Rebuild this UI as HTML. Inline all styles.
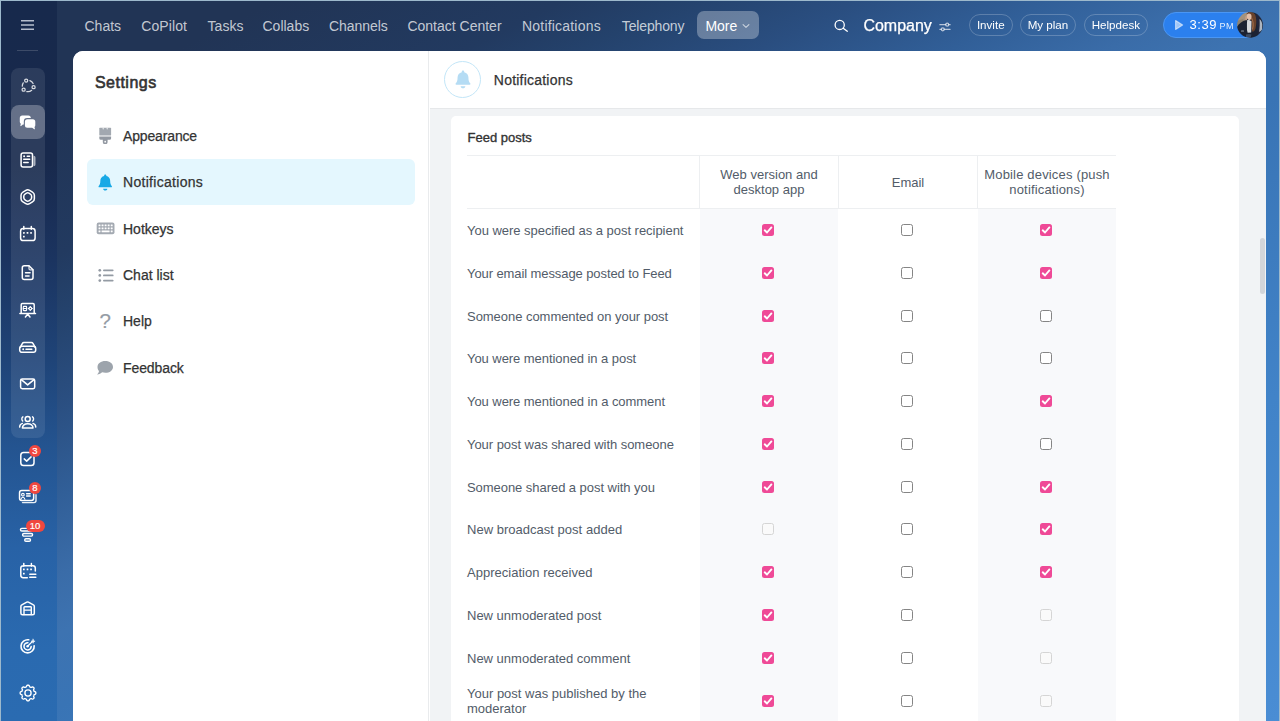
<!DOCTYPE html>
<html lang="en">
<head>
<meta charset="utf-8">
<title>Settings - Notifications</title>
<style>
*{box-sizing:border-box;margin:0;padding:0}
html,body{width:1280px;height:721px;overflow:hidden}
body{opacity:.999;font-family:"Liberation Sans",Arial,sans-serif;position:relative;background:#9db9cc;color:#333}
.abs{position:absolute}
#bg{position:absolute;left:1px;top:1px;width:1278px;height:720px;
 background:linear-gradient(153.4deg,#213455 0%,#213455 10%,#223a60 20.7%,#24426c 25%,#2a4e80 31.5%,#315f98 38.5%,#3a6ca8 44.3%,#3d73b1 48.6%,#3974b5 54%,#4183c8 76%,#4a8dd4 100%)}
#side{position:absolute;left:1px;top:1px;width:56px;height:720px;
 background:linear-gradient(to bottom,#17294c 0%,#18294c 22%,#1b3460 36%,#1f4478 50%,#245490 62%,#2862a6 76%,#2a6ab0 90%,#2a6bb1 100%)}
#side .sep{position:absolute;left:16px;top:49px;width:21px;height:1px;background:rgba(255,255,255,.16)}
#side .grp{position:absolute;left:10px;top:67px;width:34px;height:370px;border-radius:8px;background:rgba(255,255,255,.09)}
#side .act{position:absolute;left:10px;top:104px;width:34px;height:34px;border-radius:8px;background:rgba(255,255,255,.27)}
#side svg{position:absolute;left:17px;width:20px;height:20px;fill:none;stroke:#fff;stroke-width:1.5;stroke-linecap:round;stroke-linejoin:round}
.badge{position:absolute;height:12.200px;border-radius:6.100px;background:#f0473f;color:#fff;font-size:9.500px;line-height:12.200px;text-align:center;-webkit-text-stroke:.2px #fff}
/* top nav */
.nav{position:absolute;top:1px;height:51px;line-height:51px;font-size:14px;color:rgba(255,255,255,.74);white-space:nowrap}
#more{position:absolute;left:697px;top:11px;width:61.5px;height:28px;border-radius:7px;background:rgba(255,255,255,.3)}
.pill{position:absolute;top:14px;height:22px;border:1px solid rgba(255,255,255,.22);border-radius:11px;color:#fff;font-size:11.6px;line-height:20px;text-align:center;white-space:nowrap}
/* panel */
#panel{position:absolute;left:73px;top:51px;width:1193px;height:670px;background:#fff;border-radius:10px 10px 0 0;overflow:hidden}
#left{position:absolute;left:0;top:0;width:356px;height:670px;background:#fff;border-right:1px solid #e9ebed}
.mi{position:absolute;left:14px;width:328px;height:46px;border-radius:6px}
.mi span{position:absolute;left:36px;top:0;line-height:46px;font-size:14px;color:#333;white-space:nowrap;-webkit-text-stroke:.25px #333}
.mi svg{position:absolute}
#right{position:absolute;left:357px;top:0;width:836px;height:670px;background:#f1f3f5}
#hdr{position:absolute;left:0;top:0;width:836px;height:58px;background:#fff;border-bottom:1px solid #e6e8ea}
#card{position:absolute;left:21px;top:65px;width:787.5px;height:620px;background:#fff;border-radius:5px}
#cin{position:absolute;left:1px;top:-1px;width:0;height:0}
.lbl{position:absolute;left:15px;font-size:13px;color:#525c69;white-space:nowrap;line-height:15px}
.col{position:absolute;top:94px;width:138px;height:560px;background:#f8f9fb}
.hl{position:absolute;background:#edeff1}
.th{position:absolute;top:41px;width:139px;height:53px;padding-bottom:2px;display:flex;align-items:center;justify-content:center;text-align:center;font-size:13px;line-height:15px;color:#525c69}
.cb{position:absolute;width:12px;height:12px;border-radius:2.5px}
.cb.on{background:#ef4a97}
.cb.off{background:#fff;border:1px solid #858585}
.cb.dis{background:#fafafa;border:1px solid #d5d5d5}
.cb.on svg{position:absolute;left:0;top:0;width:12px;height:12px}
</style>
</head>
<body>
<div id="bg"></div>
<div id="side">
 <div class="sep"></div>
 <div class="grp"></div>
 <div class="act"></div>
<!--ICONS-->
<svg style="top:73.5px" viewBox="0 0 20 20"><g stroke="rgba(255,255,255,.82)" stroke-width="1.25"><path d="M13.68 15.35A5.70 5.70 0 0 1 8.80 16.57M4.30 11.18A5.70 5.70 0 0 1 5.24 7.86M11.89 5.62A5.70 5.70 0 0 1 15.11 8.48"/><circle cx="15.58" cy="12.16" r="1.55"/><circle cx="5.62" cy="14.65" r="1.55"/><circle cx="8.18" cy="5.60" r="1.55"/></g></svg>
<svg style="top:111.0px" viewBox="0 0 20 20"><g stroke="none" fill="#fff"><path d="M4.3 3.400h6a2.500 2.500 0 0 1 2.500 2.500v.2H9.200a3.400 3.400 0 0 0-3.400 3.400v3H4.900l-1.800 1.500c-.4.300-.8.100-.7-.4l.4-1.900A2.500 2.500 0 0 1 1.800 10V5.900a2.500 2.500 0 0 1 2.500-2.500z"/><path d="M9.400 7.200h5.400a2.500 2.500 0 0 1 2.500 2.500v3.500a2.500 2.500 0 0 1-.8 1.800l.4 1.800c.1.500-.3.700-.7.400l-2-1.500H9.400a2.500 2.500 0 0 1-2.500-2.500V9.700a2.500 2.500 0 0 1 2.500-2.500z"/></g></svg>
<svg style="top:148.5px" viewBox="0 0 20 20"><rect x="3.100" y="3" width="11.400" height="14" rx="2"/><path d="M15.500 5.700h.3a1.700 1.700 0 0 1 1.700 1.700v7.200a1.700 1.700 0 0 1-1.700 1.700h-.3z" fill="rgba(255,255,255,.6)" stroke="none"/><circle cx="6.100" cy="6.300" r="1" fill="#fff" stroke="none"/><path d="M9.200 6.300h2.400M5.700 9.300h6M5.700 12.500h4.500" stroke-width="1.400"/></svg>
<svg style="top:186.0px" viewBox="0 0 20 20"><path d="M7.79 3.40Q9.70 2.30 11.61 3.40L14.46 5.05Q16.37 6.15 16.37 8.35L16.37 11.65Q16.37 13.85 14.46 14.95L11.61 16.60Q9.70 17.70 7.79 16.60L4.94 14.95Q3.03 13.85 3.03 11.65L3.03 8.35Q3.03 6.15 4.94 5.05Z"/><path d="M8.49 6.20Q9.70 5.50 10.91 6.20L12.38 7.05Q13.60 7.75 13.60 9.15L13.60 10.85Q13.60 12.25 12.38 12.95L10.91 13.80Q9.70 14.50 8.49 13.80L7.02 12.95Q5.80 12.25 5.80 10.85L5.80 9.15Q5.80 7.75 7.02 7.05Z" stroke-width="1.5"/></svg>
<svg style="top:223.0px" viewBox="0 0 20 20"><rect x="2.600" y="4.600" width="14.500" height="12" rx="2.600"/><path d="M5.800 2.400v2.800M13.300 2.400v2.800"/><g fill="#fff" stroke="none"><rect x="5" y="8.100" width="1.700" height="1.700" rx=".3"/><rect x="8.650" y="8.100" width="1.700" height="1.700" rx=".3"/><rect x="12.200" y="8.100" width="1.700" height="1.700" rx=".3"/><rect x="5" y="11.700" width="1.700" height="1.700" rx=".3"/></g></svg>
<svg style="top:260.5px" viewBox="0 0 20 20"><path d="M6.300 3.800h4.700l4 4v7.600a2 2 0 0 1-2 2H6.300a2 2 0 0 1-2-2V5.800a2 2 0 0 1 2-2z"/><path d="M11 3.800v2.800a1.200 1.200 0 0 0 1.200 1.200H15" stroke-width="1.300" stroke="rgba(255,255,255,.8)"/><path d="M7.500 10.800h4.600M7.500 14h3.600" stroke-width="1.400"/></svg>
<svg style="top:298.0px" viewBox="0 0 20 20"><path d="M3.200 14.500V5.800a1.200 1.200 0 0 1 1.200-1.200h10.600a1.200 1.200 0 0 1 1.200 1.200v8.700M1.900 14.600h15.600M9.700 15.300l-2.300 2.700M9.700 15.300l2.300 2.700" stroke-width="1.500"/><rect x="5.300" y="7.400" width="3.300" height="4.200" rx=".5" stroke-width="1.100"/><path d="M5.300 9.500h3.300" stroke-width="1.100"/><circle cx="12.300" cy="9.500" r="1.400" stroke-width="1.100"/><path d="M12.300 7.400v.8M12.300 10.800v.8M10.200 9.500h.8M13.600 9.500h.8" stroke-width="1"/></svg>
<svg style="top:335.5px" viewBox="0 0 20 20"><rect x="1.700" y="9.300" width="16" height="6" rx="2.300"/><path d="M2.300 10.200l2-3.600a2 2 0 0 1 1.700-1h7.400a2 2 0 0 1 1.700 1l2 3.600"/><circle cx="5.200" cy="12.300" r=".95" fill="#fff" stroke="none"/><path d="M8 12.300h5.800" stroke-width="1.500"/></svg>
<svg style="top:373.0px" viewBox="0 0 20 20"><rect x="2.600" y="4.900" width="14.100" height="9.800" rx="1.600"/><path d="M3.300 5.700l6.350 5.200l6.350-5.200"/></svg>
<svg style="top:410.5px" viewBox="0 0 20 20"><circle cx="9.700" cy="6.900" r="2.500"/><path d="M4.400 16.100c0-2.800 2.300-4.400 5.300-4.400s5.300 1.600 5.300 4.400z"/><g stroke-width="1.400"><path d="M4.900 4.800c-1.300.9-1.500 3-.2 4.200M14.500 4.800c1.300.9 1.500 3 .2 4.200M1.600 15.100c.1-2 1.200-3.200 2.800-3.700M17.800 15.100c-.1-2-1.200-3.200-2.800-3.700"/></g></svg>
<svg style="top:448.0px" viewBox="0 0 20 20"><rect x="2.800" y="3.500" width="13.200" height="13" rx="2.800"/><path d="M6.200 9.900l2.500 2.200l4.400-4.200" stroke-width="1.500"/></svg>
<svg style="top:485.0px" viewBox="0 0 20 20"><path d="M4.500 16.600h11.500a2 2 0 0 0 2-2V8.800" stroke="rgba(255,255,255,.9)" stroke-width="1.400"/><rect x="1.550" y="4.550" width="14.100" height="9.900" rx="2.200"/><circle cx="4.900" cy="8.700" r="1.350" stroke-width="1.100"/><path d="M2.900 13.300c.3-1.500 1.100-2.100 2-2.100s1.700.6 2 2.100" stroke-width="1.100"/><path d="M8.600 7.700h3.600M8.600 10h3.600" stroke-width="1.400"/></svg>
<svg style="top:522.5px" viewBox="0 0 20 20"><g stroke-width="1.400"><rect x="2.500" y="4.400" width="14" height="2.600" rx="1.300"/><rect x="4.600" y="9.500" width="10" height="2.600" rx="1.300"/><rect x="6.700" y="14.700" width="5.800" height="2.500" rx="1.250"/></g></svg>
<svg style="top:560.0px" viewBox="0 0 20 20"><path d="M9.300 16.700H5.200a2.400 2.400 0 0 1-2.400-2.400V7.100a2.400 2.400 0 0 1 2.400-2.400h9.700a2.400 2.400 0 0 1 2.400 2.400v2.900M5.800 2.600v2.700M13.400 2.600v2.700"/><g fill="#fff" stroke="none"><rect x="5" y="7.500" width="1.700" height="1.700" rx=".3"/><rect x="8.650" y="7.500" width="1.700" height="1.700" rx=".3"/><rect x="12.200" y="7.500" width="1.700" height="1.700" rx=".3"/><rect x="5" y="11.700" width="1.700" height="1.700" rx=".3"/></g><path d="M11.800 13.300h6M11.800 16.300h6" stroke-width="1.500"/></svg>
<svg style="top:597.5px" viewBox="0 0 20 20"><path d="M2.900 14.200V7.300a1.600 1.600 0 0 1 .9-1.400l5-2.700a1.700 1.700 0 0 1 1.600 0l5 2.700a1.600 1.600 0 0 1 .9 1.400v6.900a1.500 1.500 0 0 1-1.500 1.500H4.400a1.500 1.500 0 0 1-1.500-1.500z"/><path d="M6 15.600V8.400a.7.700 0 0 1 .7-.7h5.900a.7.700 0 0 1 .7.700v7.200M6 11.100h7.300" stroke-width="1.400"/></svg>
<svg style="top:635.0px" viewBox="0 0 20 20"><path d="M16.17 9.72A6.60 6.60 0 1 1 10.75 3.80" stroke-width="1.600"/><path d="M13.19 10.61A3.60 3.60 0 1 1 9.91 6.71" stroke-width="1.500"/><circle cx="9.6" cy="10.3" r="1.200" fill="#fff" stroke="none"/><path d="M9.6 10.3L14 5.900" stroke-width="1.300"/><path d="M15.100 3.200l.5 1.500l1.500.5l-1.500.6l-.5 1.500l-.6-1.500l-1.500-.6l1.500-.5z" fill="#fff" stroke="#fff" stroke-width=".5"/></svg>
<svg style="top:682.0px" viewBox="0 0 20 20"><path d="M10.00 2.20L10.38 2.21L10.76 2.24L11.11 2.54L11.38 3.09L11.59 3.63L11.83 3.97L12.12 4.07L12.41 4.18L12.69 4.30L12.97 4.44L13.37 4.37L13.92 4.14L14.49 3.95L14.95 3.97L15.24 4.22L15.52 4.48L15.78 4.76L16.03 5.05L16.05 5.51L15.86 6.08L15.63 6.63L15.56 7.03L15.70 7.31L15.82 7.59L15.93 7.88L16.03 8.17L16.37 8.41L16.91 8.62L17.46 8.89L17.76 9.24L17.79 9.62L17.80 10.00L17.79 10.38L17.76 10.76L17.46 11.11L16.91 11.38L16.37 11.59L16.03 11.83L15.93 12.12L15.82 12.41L15.70 12.69L15.56 12.97L15.63 13.37L15.86 13.92L16.05 14.49L16.03 14.95L15.78 15.24L15.52 15.52L15.24 15.78L14.95 16.03L14.49 16.05L13.92 15.86L13.37 15.63L12.97 15.56L12.69 15.70L12.41 15.82L12.12 15.93L11.83 16.03L11.59 16.37L11.38 16.91L11.11 17.46L10.76 17.76L10.38 17.79L10.00 17.80L9.62 17.79L9.24 17.76L8.89 17.46L8.62 16.91L8.41 16.37L8.17 16.03L7.88 15.93L7.59 15.82L7.31 15.70L7.03 15.56L6.63 15.63L6.08 15.86L5.51 16.05L5.05 16.03L4.76 15.78L4.48 15.52L4.22 15.24L3.97 14.95L3.95 14.49L4.14 13.92L4.37 13.37L4.44 12.97L4.30 12.69L4.18 12.41L4.07 12.12L3.97 11.83L3.63 11.59L3.09 11.38L2.54 11.11L2.24 10.76L2.21 10.38L2.20 10.00L2.21 9.62L2.24 9.24L2.54 8.89L3.09 8.62L3.63 8.41L3.97 8.17L4.07 7.88L4.18 7.59L4.30 7.31L4.44 7.03L4.37 6.63L4.14 6.08L3.95 5.51L3.97 5.05L4.22 4.76L4.48 4.48L4.76 4.22L5.05 3.97L5.51 3.95L6.08 4.14L6.63 4.37L7.03 4.44L7.31 4.30L7.59 4.18L7.88 4.07L8.17 3.97L8.41 3.63L8.62 3.09L8.89 2.54L9.24 2.24L9.62 2.21L10.00 2.20Z" stroke-width="1.350"/><circle cx="10" cy="10" r="3.100" stroke-width="1.350"/></svg>
<div class="badge" style="left:27.900px;top:443.900px;width:12.200px">3</div>
<div class="badge" style="left:27.900px;top:481.100px;width:12.200px">8</div>
<div class="badge" style="left:24.500px;top:519px;width:19px">10</div>
<!--/ICONS-->
</div>
<div id="top">
 <svg class="abs" style="left:20px;top:18px;width:15px;height:14px" viewBox="0 0 15 14"><path d="M1 2.7h13M1 7h13M1 11.3h13" stroke="#b6becd" stroke-width="1.5" fill="none"/></svg>
 <span class="nav" id="n1" style="left:84.5px">Chats</span>
 <span class="nav" id="n2" style="left:141.2px;letter-spacing:.1px">CoPilot</span>
 <span class="nav" id="n3" style="left:207.6px">Tasks</span>
 <span class="nav" id="n4" style="left:262.5px">Collabs</span>
 <span class="nav" id="n5" style="left:329px;letter-spacing:-.05px">Channels</span>
 <span class="nav" id="n6" style="left:407.4px">Contact Center</span>
 <span class="nav" id="n7" style="left:522px;letter-spacing:.2px">Notifications</span>
 <span class="nav" id="n8" style="left:621.8px;letter-spacing:-.15px">Telephony</span>
 <div id="more"></div>
 <span class="nav" id="n9" style="left:705.4px;color:#fff">More</span>
 <svg class="abs" style="left:741px;top:22px;width:10px;height:8px" viewBox="0 0 10 8"><path d="M2.1 2.7L5 5.4L7.9 2.7" stroke="rgba(255,255,255,.65)" stroke-width="1.1" fill="none" stroke-linecap="round" stroke-linejoin="round"/></svg>
 <svg class="abs" style="left:833px;top:17px;width:17px;height:17px" viewBox="0 0 17 17"><circle cx="6.7" cy="7.9" r="4.6" stroke="#fff" stroke-width="1.3" fill="none"/><path d="M10.2 11.2L14.3 14.2" stroke="#fff" stroke-width="1.4" stroke-linecap="round"/></svg>
 <span class="nav" id="co" style="left:863.4px;top:0;font-size:16px;color:#fff;-webkit-text-stroke:.25px #fff">Company</span>
 <svg class="abs" style="left:939.300px;top:20.500px;width:12px;height:12px" viewBox="0 0 13 13"><g stroke="rgba(255,255,255,.66)" stroke-width="1.4" fill="none" stroke-linecap="round"><path d="M1 4h6.2M10.6 4h1.4M1 9h1.4M5.8 9h6.2"/><circle cx="8.9" cy="4" r="1.6"/><circle cx="4.1" cy="9" r="1.6"/></g></svg>
 <div class="pill" style="left:969px;width:43.5px" id="p1">Invite</div>
 <div class="pill" style="left:1019.7px;width:56.6px" id="p2">My plan</div>
 <div class="pill" style="left:1083.5px;width:64.7px" id="p3">Helpdesk</div>
 <div class="abs" style="left:1163px;top:12px;width:99px;height:26px;border-radius:13px;background:#2b80ee;border:1px solid #4a96f4"></div>
 <svg class="abs" style="left:1174px;top:19px;width:10px;height:12px" viewBox="0 0 10 12"><path d="M1.6 1.6L8.6 6L1.6 10.4Z" fill="rgba(255,255,255,.55)" stroke="rgba(255,255,255,.55)" stroke-width="1.2" stroke-linejoin="round"/></svg>
 <span class="nav" id="tm" style="left:1189.5px;top:-1px;letter-spacing:.55px;font-size:13px;color:#fff">3:39</span>
 <span class="nav" id="pm" style="left:1219.6px;letter-spacing:.5px;font-size:9px;color:rgba(255,255,255,.88);top:.5px">PM</span>
 <svg class="abs" id="ava" style="left:1237.2px;top:12px;width:26px;height:26px" viewBox="0 0 26 26">
  <defs><clipPath id="avc"><circle cx="13" cy="13" r="12.9"/></clipPath><filter id="avb" x="-10%" y="-10%" width="120%" height="120%"><feGaussianBlur stdDeviation=".45"/></filter></defs>
  <g clip-path="url(#avc)"><g filter="url(#avb)">
   <rect width="26" height="26" fill="#1b2230"/>
   <path d="M0 0h11v6l-4 5l-7 3z" fill="#a3927d"/>
   <path d="M0 9l6-2l2 3l-8 5z" fill="#8f8270"/>
   <path d="M18 0h8v26h-5l-1-12z" fill="#20283a"/>
   <path d="M22.500 7c1.500 1 2.500 3 2.800 5.500l-.3 5c-1 1.500-2 2-3 2.500c.8-4 .9-9 .5-13z" fill="#aeb6c0"/>
   <path d="M9.500 1.500c2-2.500 7.500-2 8.800 1.500c1 3 1.600 8 .2 13.500c-.6 2.300-2 3.500-3.500 3l-.5-11l-3-2z" fill="#6b432c"/>
   <path d="M14.500 6c1.500 2.500 2.200 7 1 11.500" stroke="#a06f4b" stroke-width="1.100" fill="none"/>
   <path d="M10.200 2.200c1.500-1.200 3.700-.6 4.200 1.300c.4 1.800 0 3.600-1.200 4.300c-1.300.7-2.700-.1-3.200-1.700c-.4-1.300-.5-2.900.2-3.900z" fill="#e2bfa9"/>
   <path d="M8.300 4.500c.7-.6 1.500-.3 1.600.6l.2 3l-1.800 1.200z" fill="#c99f86"/>
   <path d="M10 8.300l1.700-.5l2.800 1.400l-.3 11.300l-3.900.3c-.6-4-.8-8.500-.3-12.500z" fill="#d5d8dc"/>
   <path d="M0 15c2-3.500 5-6 8.300-6.800l1.900.2c-.7 4-.5 9 .4 13l3.600 1.200V26H0z" fill="#1c2431"/>
   <path d="M9 22.500c2-.8 4-.8 5.500 0l-1 3.500H9z" fill="#3c4b63"/>
   <path d="M4 18.500c1-.6 2.200-.6 3 0v1.500H4z" fill="#59616e"/>
  </g></g>
 </svg>
</div>
<div id="panel">
 <div id="left">
  <div class="abs" id="st" style="left:21.9px;top:21px;font-size:16px;-webkit-text-stroke:.6px #333;letter-spacing:.5px;color:#333;line-height:22px;white-space:nowrap">Settings</div>
  <div class="mi" style="top:62px"><svg style="left:11.6px;top:13.6px;width:13px;height:17px" viewBox="0 0 13 17"><rect x=".3" y=".8" width="11.800" height="7.800" rx=".6" fill="#a2a8b0"/><rect x="3.700" y=".5" width=".9" height="1.900" rx=".4" fill="#fff"/><rect x="7.700" y=".5" width=".9" height="1.900" rx=".4" fill="#fff"/><path d="M.3 9.600h11.800v1.700a1.500 1.500 0 0 1-1.500 1.500H8.600v2.100a2.400 2.400 0 0 1-4.800 0v-2.100H1.800a1.500 1.500 0 0 1-1.500-1.500z" fill="#9399a2"/><circle cx="6.200" cy="14.700" r=".85" fill="#fff"/></svg><span id="m1" style="letter-spacing:-.15px">Appearance</span></div>
  <div class="mi" style="top:108.3px;background:#e4f7fe"><svg style="left:11px;top:14.500px;width:14.500px;height:16.900px" viewBox="0 0 15 17.5"><path d="M7.500.5c.650 0 1.150.5 1.150 1.150v.35c2.350.5 3.950 2.500 3.950 5c0 2.600.45 4.200 1.650 5.400c.5.500.25 1.400-.5 1.400H1.250c-.75 0-1-.9-.5-1.400c1.200-1.200 1.650-2.800 1.650-5.400c0-2.500 1.600-4.500 3.950-5v-.35C6.350 1 6.850.5 7.500.5z" fill="#18a9e6"/><path d="M5.300 15.200h4.400c0 1.100-1 1.900-2.200 1.900s-2.200-.8-2.200-1.900z" fill="#18a9e6"/></svg><span id="m2" style="letter-spacing:.3px">Notifications</span></div>
  <div class="mi" style="top:154.6px"><svg style="left:9.4px;top:16.4px;width:19.2px;height:13px" viewBox="0 0 19.2 13"><rect x="0.7" y="0.6" width="17.8" height="11.6" rx="2" fill="#a4aab2"/><g fill="#fff"><rect x="2.55" y="2.55" width="1.9" height="1.7" rx=".3"/><rect x="5.60" y="2.55" width="1.9" height="1.7" rx=".3"/><rect x="8.65" y="2.55" width="1.9" height="1.7" rx=".3"/><rect x="11.70" y="2.55" width="1.9" height="1.7" rx=".3"/><rect x="14.75" y="2.55" width="1.9" height="1.7" rx=".3"/><rect x="2.55" y="5.45" width="1.9" height="1.7" rx=".3"/><rect x="5.60" y="5.45" width="1.9" height="1.7" rx=".3"/><rect x="8.65" y="5.45" width="1.9" height="1.7" rx=".3"/><rect x="11.70" y="5.45" width="1.9" height="1.7" rx=".3"/><rect x="14.75" y="5.45" width="1.9" height="1.7" rx=".3"/><rect x="2.55" y="8.45" width="1.9" height="1.7" rx=".3"/><rect x="5.6" y="8.45" width="8" height="1.7" rx=".3"/><rect x="14.75" y="8.45" width="1.9" height="1.7" rx=".3"/></g></svg><span id="m3">Hotkeys</span></div>
  <div class="mi" style="top:200.9px"><svg style="left:10.9px;top:15.7px;width:17px;height:15px" viewBox="0 0 17 15"><g fill="#949ba4"><circle cx="1.8" cy="2.3" r="1.35"/><circle cx="1.8" cy="7.45" r="1.35"/><circle cx="1.8" cy="12.6" r="1.35"/><rect x="5" y="1.4" width="10.6" height="1.8" rx=".9"/><rect x="5" y="6.55" width="10.6" height="1.8" rx=".9"/><rect x="5" y="11.7" width="10.6" height="1.8" rx=".9"/></g></svg><span id="m4">Chat list</span></div>
  <div class="mi" style="top:247.2px"><div class="abs" style="left:11.300px;top:0;width:14px;text-align:center;font-size:20.500px;line-height:46px;color:#959ca5;-webkit-text-stroke:.2px #959ca5">?</div><span id="m5">Help</span></div>
  <div class="mi" style="top:293.5px"><svg style="left:9px;top:15px;width:18px;height:16px" viewBox="0 0 18 16"><path d="M9.300 1C13.700 1 17 3.500 17 6.900s-3.300 5.900-7.700 5.900c-1.100 0-2.200-.2-3.200-.5C5 13.500 3.300 14.600 1 14.600c1.100-1 1.800-2.300 2-3.600C2 9.900 1.500 8.500 1.500 6.900C1.500 3.500 4.900 1 9.300 1z" fill="#9da4ac"/></svg><span id="m6" style="letter-spacing:-.1px">Feedback</span></div>
 </div>
 <div id="right">
  <div id="hdr">
   <div class="abs" style="left:14px;top:9.7px;width:37.2px;height:37.2px;border-radius:50%;border:1px solid #c3e6f8;background:#fff"></div>
   <svg class="abs" style="left:24.600px;top:19.200px;width:16px;height:18.700px" viewBox="0 0 15 17.5"><path d="M7.500.5c.650 0 1.150.5 1.150 1.150v.35c2.350.5 3.950 2.500 3.950 5c0 2.600.45 4.200 1.650 5.400c.5.500.25 1.400-.5 1.400H1.250c-.75 0-1-.9-.5-1.400c1.200-1.200 1.650-2.800 1.650-5.400c0-2.500 1.600-4.500 3.950-5v-.35C6.350 1 6.850.5 7.500.5z" fill="#b5dcf4"/><path d="M5.300 15.200h4.400c0 1.100-1 1.900-2.200 1.900s-2.200-.8-2.200-1.900z" fill="#b5dcf4"/></svg>
   <div class="abs" id="ht" style="-webkit-text-stroke:.25px #333;letter-spacing:.22px;left:63.8px;top:18px;font-size:14px;line-height:22px;color:#333;white-space:nowrap">Notifications</div>
  </div>
  <div id="card"><div id="cin">
<div class="abs" id="fp" style="left:15.5px;top:15px;font-size:13px;-webkit-text-stroke:.35px #333;color:#333;line-height:16px;white-space:nowrap">Feed posts</div>
<div class="col" style="left:248px"></div>
<div class="col" style="left:526px"></div>
<div class="hl" style="left:15px;top:40px;width:649px;height:1px"></div>
<div class="hl" style="left:15px;top:93px;width:649px;height:1px"></div>
<div class="hl" style="left:247px;top:40px;width:1px;height:54px"></div>
<div class="hl" style="left:386px;top:40px;width:1px;height:54px"></div>
<div class="hl" style="left:525px;top:40px;width:1px;height:54px"></div>
<div class="th" id="h1" style="left:247.5px">Web version and<br>desktop app</div>
<div class="th" id="h2" style="padding-bottom:0;left:386.5px">Email</div>
<div class="th" id="h3" style="letter-spacing:.17px;left:525.5px">Mobile devices (push<br>notifications)</div>
<div class="lbl" id="r0" style="letter-spacing:-0.035px;top:108.0px">You were specified as a post recipient</div>
<div class="cb on" style="left:310.2px;top:109.0px"><svg viewBox="0 0 12 12"><path d="M2.7 6.3L5 8.5L9.4 3.4" stroke="#fff" stroke-width="1.9" fill="none" stroke-linecap="round" stroke-linejoin="round"/></svg></div>
<div class="cb off" style="left:449.2px;top:109.0px"></div>
<div class="cb on" style="left:588.2px;top:109.0px"><svg viewBox="0 0 12 12"><path d="M2.7 6.3L5 8.5L9.4 3.4" stroke="#fff" stroke-width="1.9" fill="none" stroke-linecap="round" stroke-linejoin="round"/></svg></div>
<div class="lbl" id="r1" style="letter-spacing:-0.090px;top:150.8px">Your email message posted to Feed</div>
<div class="cb on" style="left:310.2px;top:151.8px"><svg viewBox="0 0 12 12"><path d="M2.7 6.3L5 8.5L9.4 3.4" stroke="#fff" stroke-width="1.9" fill="none" stroke-linecap="round" stroke-linejoin="round"/></svg></div>
<div class="cb off" style="left:449.2px;top:151.8px"></div>
<div class="cb on" style="left:588.2px;top:151.8px"><svg viewBox="0 0 12 12"><path d="M2.7 6.3L5 8.5L9.4 3.4" stroke="#fff" stroke-width="1.9" fill="none" stroke-linecap="round" stroke-linejoin="round"/></svg></div>
<div class="lbl" id="r2" style="letter-spacing:-0.040px;top:193.5px">Someone commented on your post</div>
<div class="cb on" style="left:310.2px;top:194.5px"><svg viewBox="0 0 12 12"><path d="M2.7 6.3L5 8.5L9.4 3.4" stroke="#fff" stroke-width="1.9" fill="none" stroke-linecap="round" stroke-linejoin="round"/></svg></div>
<div class="cb off" style="left:449.2px;top:194.5px"></div>
<div class="cb off" style="left:588.2px;top:194.5px"></div>
<div class="lbl" id="r3" style="letter-spacing:-0.060px;top:236.3px">You were mentioned in a post</div>
<div class="cb on" style="left:310.2px;top:237.3px"><svg viewBox="0 0 12 12"><path d="M2.7 6.3L5 8.5L9.4 3.4" stroke="#fff" stroke-width="1.9" fill="none" stroke-linecap="round" stroke-linejoin="round"/></svg></div>
<div class="cb off" style="left:449.2px;top:237.3px"></div>
<div class="cb off" style="left:588.2px;top:237.3px"></div>
<div class="lbl" id="r4" style="letter-spacing:-0.056px;top:279.1px">You were mentioned in a comment</div>
<div class="cb on" style="left:310.2px;top:280.1px"><svg viewBox="0 0 12 12"><path d="M2.7 6.3L5 8.5L9.4 3.4" stroke="#fff" stroke-width="1.9" fill="none" stroke-linecap="round" stroke-linejoin="round"/></svg></div>
<div class="cb off" style="left:449.2px;top:280.1px"></div>
<div class="cb on" style="left:588.2px;top:280.1px"><svg viewBox="0 0 12 12"><path d="M2.7 6.3L5 8.5L9.4 3.4" stroke="#fff" stroke-width="1.9" fill="none" stroke-linecap="round" stroke-linejoin="round"/></svg></div>
<div class="lbl" id="r5" style="letter-spacing:-0.045px;top:321.9px">Your post was shared with someone</div>
<div class="cb on" style="left:310.2px;top:322.9px"><svg viewBox="0 0 12 12"><path d="M2.7 6.3L5 8.5L9.4 3.4" stroke="#fff" stroke-width="1.9" fill="none" stroke-linecap="round" stroke-linejoin="round"/></svg></div>
<div class="cb off" style="left:449.2px;top:322.9px"></div>
<div class="cb off" style="left:588.2px;top:322.9px"></div>
<div class="lbl" id="r6" style="letter-spacing:-0.050px;top:364.6px">Someone shared a post with you</div>
<div class="cb on" style="left:310.2px;top:365.6px"><svg viewBox="0 0 12 12"><path d="M2.7 6.3L5 8.5L9.4 3.4" stroke="#fff" stroke-width="1.9" fill="none" stroke-linecap="round" stroke-linejoin="round"/></svg></div>
<div class="cb off" style="left:449.2px;top:365.6px"></div>
<div class="cb on" style="left:588.2px;top:365.6px"><svg viewBox="0 0 12 12"><path d="M2.7 6.3L5 8.5L9.4 3.4" stroke="#fff" stroke-width="1.9" fill="none" stroke-linecap="round" stroke-linejoin="round"/></svg></div>
<div class="lbl" id="r7" style="letter-spacing:0.020px;top:407.4px">New broadcast post added</div>
<div class="cb dis" style="left:310.2px;top:408.4px"></div>
<div class="cb off" style="left:449.2px;top:408.4px"></div>
<div class="cb on" style="left:588.2px;top:408.4px"><svg viewBox="0 0 12 12"><path d="M2.7 6.3L5 8.5L9.4 3.4" stroke="#fff" stroke-width="1.9" fill="none" stroke-linecap="round" stroke-linejoin="round"/></svg></div>
<div class="lbl" id="r8" style="letter-spacing:0.020px;top:450.2px">Appreciation received</div>
<div class="cb on" style="left:310.2px;top:451.2px"><svg viewBox="0 0 12 12"><path d="M2.7 6.3L5 8.5L9.4 3.4" stroke="#fff" stroke-width="1.9" fill="none" stroke-linecap="round" stroke-linejoin="round"/></svg></div>
<div class="cb off" style="left:449.2px;top:451.2px"></div>
<div class="cb on" style="left:588.2px;top:451.2px"><svg viewBox="0 0 12 12"><path d="M2.7 6.3L5 8.5L9.4 3.4" stroke="#fff" stroke-width="1.9" fill="none" stroke-linecap="round" stroke-linejoin="round"/></svg></div>
<div class="lbl" id="r9" style="top:492.9px">New unmoderated post</div>
<div class="cb on" style="left:310.2px;top:493.9px"><svg viewBox="0 0 12 12"><path d="M2.7 6.3L5 8.5L9.4 3.4" stroke="#fff" stroke-width="1.9" fill="none" stroke-linecap="round" stroke-linejoin="round"/></svg></div>
<div class="cb off" style="left:449.2px;top:493.9px"></div>
<div class="cb dis" style="left:588.2px;top:493.9px"></div>
<div class="lbl" id="r10" style="top:535.7px">New unmoderated comment</div>
<div class="cb on" style="left:310.2px;top:536.7px"><svg viewBox="0 0 12 12"><path d="M2.7 6.3L5 8.5L9.4 3.4" stroke="#fff" stroke-width="1.9" fill="none" stroke-linecap="round" stroke-linejoin="round"/></svg></div>
<div class="cb off" style="left:449.2px;top:536.7px"></div>
<div class="cb dis" style="left:588.2px;top:536.7px"></div>
<div class="lbl" id="r11" style="top:571.0px">Your post was published by the<br>moderator</div>
<div class="cb on" style="left:310.2px;top:579.5px"><svg viewBox="0 0 12 12"><path d="M2.7 6.3L5 8.5L9.4 3.4" stroke="#fff" stroke-width="1.9" fill="none" stroke-linecap="round" stroke-linejoin="round"/></svg></div>
<div class="cb off" style="left:449.2px;top:579.5px"></div>
<div class="cb dis" style="left:588.2px;top:579.5px"></div>
</div></div>
<div class="abs" style="left:830px;top:187px;width:5px;height:56px;border-radius:3px;background:#d3d6da"></div>
 </div>
</div>
</body>
</html>
